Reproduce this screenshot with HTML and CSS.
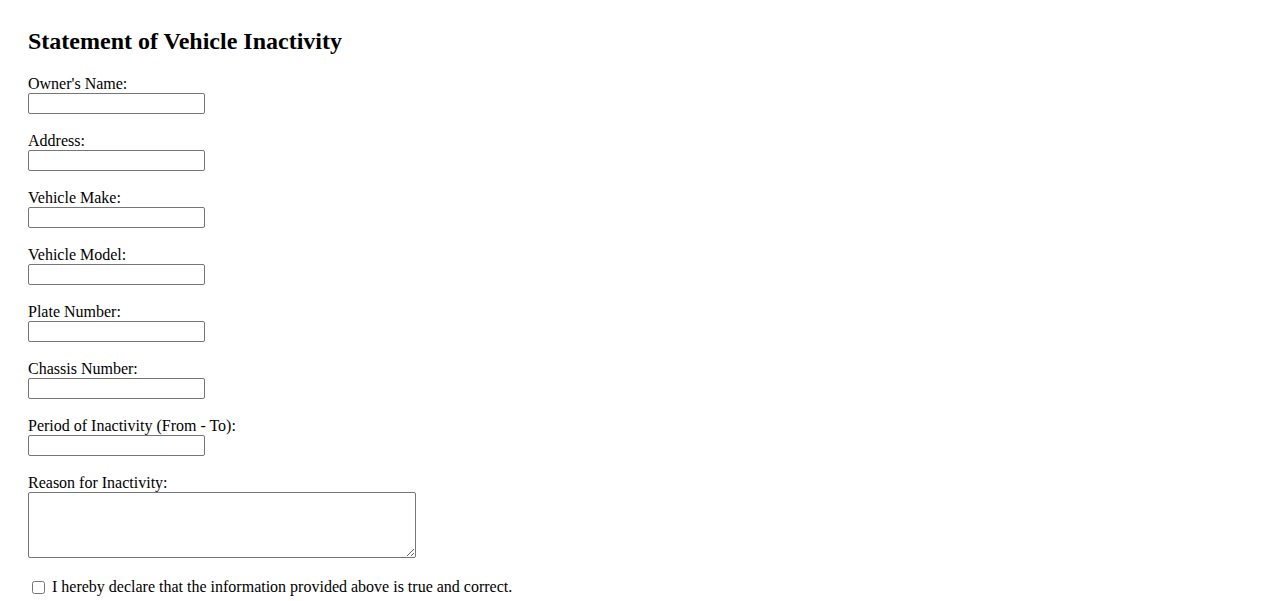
FILE: index.html
```html
<!DOCTYPE html>
<html lang="en">
<head>
    <meta charset="UTF-8">
    <meta name="viewport" content="width=device-width, initial-scale=1.0">
    <title>Statement of Vehicle Inactivity</title>
    <link rel="stylesheet" href="styles.css">
</head>
<body>
    <h2>Statement of Vehicle Inactivity</h2>
    <form id="inactivityForm">
        <div class="field">
            <label for="ownerName">Owner's Name:</label>
            <input type="text" id="ownerName" name="ownerName">
        </div>
        <div class="field">
            <label for="address">Address:</label>
            <input type="text" id="address" name="address">
        </div>
        <div class="field">
            <label for="make">Vehicle Make:</label>
            <input type="text" id="make" name="make">
        </div>
        <div class="field">
            <label for="model">Vehicle Model:</label>
            <input type="text" id="model" name="model">
        </div>
        <div class="field">
            <label for="plate">Plate Number:</label>
            <input type="text" id="plate" name="plate">
        </div>
        <div class="field">
            <label for="chassis">Chassis Number:</label>
            <input type="text" id="chassis" name="chassis">
        </div>
        <div class="field">
            <label for="period">Period of Inactivity (From - To):</label>
            <input type="text" id="period" name="period">
        </div>
        <div class="field">
            <label for="reason">Reason for Inactivity:</label>
            <textarea id="reason" name="reason" rows="4"></textarea>
        </div>
        <div class="declare">
            <input type="checkbox" id="declare" name="declare">
            <label for="declare">I hereby declare that the information provided above is true and correct.</label>
        </div>
    </form>
</body>
</html>
```

FILE: styles.css
```css
body {
    font-family: 'Liberation Serif', 'Times New Roman', serif;
    font-size: 16px;
    color: #000;
    background-color: #fff;
    margin: 0;
    padding: 28px;
}

h2 {
    font-size: 24px;
    font-weight: bold;
    margin: 0 0 20px;
}

.field {
    display: flex;
    flex-direction: column;
    align-items: flex-start;
    margin-bottom: 18px;
}

.field label {
    line-height: 18px;
}

.field input {
    box-sizing: border-box;
    width: 177px;
    height: 21px;
    margin: 0;
    padding: 1px 2px;
    border: 1px solid #767676;
    border-radius: 2px;
    font-family: 'Liberation Sans', Arial, sans-serif;
    font-size: 13px;
}

.field textarea {
    box-sizing: border-box;
    width: 388px;
    height: 66px;
    margin: 0;
    padding: 2px;
    border: 1px solid #767676;
    border-radius: 2px;
    font-family: 'Liberation Mono', monospace;
    font-size: 13px;
}

.declare {
    display: flex;
    align-items: center;
    margin-top: 20px;
}

.declare input {
    width: 13px;
    height: 13px;
    margin: 0 7px 0 4px;
}
```
